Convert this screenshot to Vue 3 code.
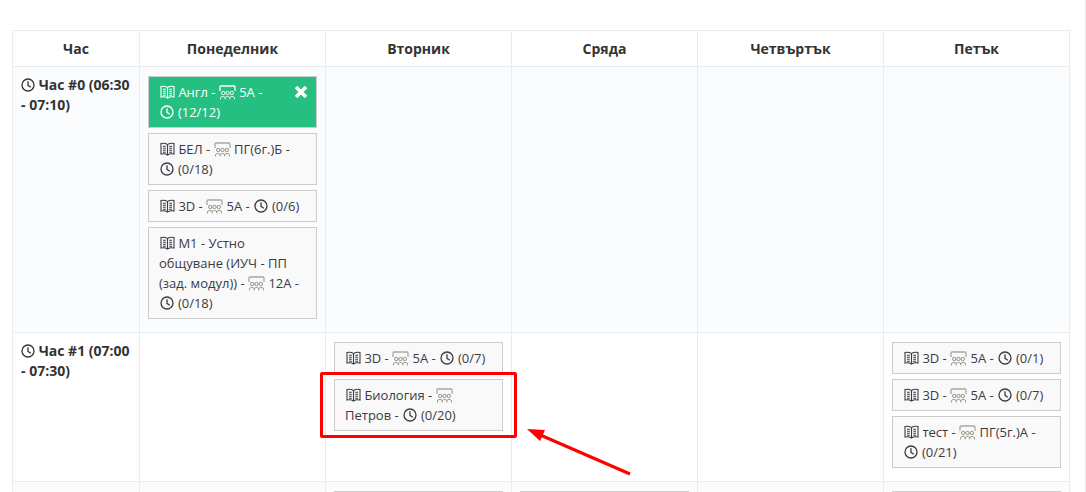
<script setup>
const days = ['Понеделник', 'Вторник', 'Сряда', 'Четвъртък', 'Петък']
const rows = [
  {
    label: 'Час #0 (06:30 - 07:10)',
    cells: [
      [
        { subject: 'Англ', group: '5А', count: '(12/12)', active: true },
        { subject: 'БЕЛ', group: 'ПГ(6г.)Б', count: '(0/18)' },
        { subject: '3D', group: '5А', count: '(0/6)' },
        { subject: 'М1 - Устно общуване (ИУЧ - ПП (зад. модул))', group: '12А', count: '(0/18)' },
      ],
      [], [], [], [],
    ],
  },
  {
    label: 'Час #1 (07:00 - 07:30)',
    cells: [
      [],
      [
        { subject: '3D', group: '5А', count: '(0/7)' },
        { subject: 'Биология', group: 'Петров', count: '(0/20)' },
      ],
      [], [],
      [
        { subject: '3D', group: '5А', count: '(0/1)' },
        { subject: '3D', group: '5А', count: '(0/7)' },
        { subject: 'тест', group: 'ПГ(5г.)А', count: '(0/21)' },
      ],
    ],
  },
  {
    label: '',
    cells: [
      [],
      [{ subject: '', group: '', count: '' }],
      [{ subject: '', group: '', count: '' }],
      [],
      [{ subject: '', group: '', count: '' }],
    ],
  },
]
</script>

<template>
  <div class="page">
    <div class="table">
      <div class="row head">
        <div class="cell first">Час</div>
        <div v-for="d in days" :key="d" class="cell">{{ d }}</div>
      </div>
      <div v-for="(r, i) in rows" :key="i" class="row" :class="{ odd: i % 2 === 0 }">
        <div class="cell first hour">
          <template v-if="r.label">
            <svg class="ico" viewBox="0 0 14 14"><circle cx="7" cy="7" r="6" /><path d="M7 3.2V7.4L9.8 9.2" /></svg>
            {{ r.label }}
          </template>
        </div>
        <div v-for="(c, j) in r.cells" :key="j" class="cell slots">
          <div v-for="(s, k) in c" :key="k" class="card" :class="{ active: s.active }">
            <svg v-if="s.active" class="close" viewBox="0 0 14 14"><path d="M2 2L12 12M12 2L2 12" /></svg>
            <template v-if="s.subject">
              <svg class="ico book" viewBox="0 0 15 14"><path d="M7.5 2.6C6 1.4 3 1.1 1 1.5V12C3 11.6 6 11.9 7.5 13C9 11.9 12 11.6 14 12V1.5C12 1.1 9 1.4 7.5 2.6ZM7.5 2.6V13M3 4.2H5.8M3 6.2H5.8M3 8.2H5.8M3 10.2H5.8M9.2 4.2H12M9.2 6.2H12M9.2 8.2H12M9.2 10.2H12" /></svg>
              {{ s.subject }} -
              <svg class="ico group" viewBox="0 0 17 15"><path class="board" d="M1 6V2Q1 1 2 1H15Q16 1 16 2V6" /><path class="people" d="M2.5 8A1.7 1.7 0 1 1 5.9 8A1.7 1.7 0 1 1 2.5 8ZM6.8 8A1.7 1.7 0 1 1 10.2 8A1.7 1.7 0 1 1 6.8 8ZM11.1 8A1.7 1.7 0 1 1 14.5 8A1.7 1.7 0 1 1 11.1 8ZM1.5 14.4V13C1.5 11 6.2 11 6.2 13V14.4M6.2 13C6.2 11 10.8 11 10.8 13V14.4M10.8 13C10.8 11 15.5 11 15.5 13V14.4" /></svg>
              {{ s.group }} -
              <span class="count"><svg class="ico clock" viewBox="0 0 14 14"><circle cx="7" cy="7" r="6" /><path d="M7 3.2V7.4L9.8 9.2" /></svg> {{ s.count }}</span>
            </template>
          </div>
        </div>
      </div>
    </div>
    <div class="highlight"></div>
    <svg class="arrow" viewBox="0 0 120 60" width="120" height="60">
      <path d="M110 54L18 14" />
      <polygon points="7,9 25,10 20,21" />
    </svg>
  </div>
</template>

<style scoped>
.page {
  position: relative;
  height: 492px;
  overflow: hidden;
  background: #fff;
  padding: 30px 16px 0 12px;
  box-sizing: border-box;
  border-right: 1px solid #eee;
  font: 13px/20px "Open Sans", sans-serif;
  color: #3b3b45;
}
.table {
  border-top: 1px solid #e9ecef;
  border-left: 1px solid #e9ecef;
  width: 1058px;
}
.row {
  display: grid;
  grid-template-columns: 127px repeat(5, 186px);
}
.odd {
  background: #fbfcfe;
}
.head {
  background: #fff;
  font-size: 14px;
  font-weight: 700;
  text-align: center;
  color: #333;
}
.cell {
  border-right: 1px solid #e9ecef;
  border-bottom: 1px solid #e9ecef;
  padding: 8px;
  box-sizing: border-box;
  min-width: 0;
}
.head .cell {
  padding: 8px 8px 7px;
}
.hour {
  font-size: 14px;
  font-weight: 700;
  color: #333;
}
.slots {
  display: flex;
  flex-direction: column;
  gap: 5px;
  padding: 9px 8px 13px;
}
.card {
  position: relative;
  border: 1px solid #ccc;
  background: #f9f9f9;
  padding: 5px 10px;
}
.card.active {
  background: #26bf82;
  color: #fff;
  border-color: #ccc;
}
.count {
  white-space: nowrap;
}
.ico {
  display: inline-block;
  width: 14px;
  height: 14px;
  vertical-align: -2px;
  fill: none;
  stroke: currentColor;
  stroke-width: 1.3;
}
.clock {
  margin: 0 0.5px 0 1px;
}
.book {
  width: 15px;
  margin-left: 1px;
  stroke-width: 1.1;
}
.group {
  width: 17px;
  height: 15px;
  vertical-align: -3px;
}
.group .people {
  stroke: #8b8478;
  stroke-width: 0.9;
}
.group .board {
  stroke: #a8a8a8;
  stroke-width: 1.3;
}
.active .group .people,
.active .group .board {
  stroke: #fff;
}
.close {
  position: absolute;
  top: 8px;
  right: 8px;
  width: 14px;
  height: 14px;
  fill: none;
  stroke: #fff;
  stroke-width: 3.6;
}
.highlight {
  position: absolute;
  left: 320px;
  top: 372px;
  width: 197px;
  height: 66px;
  border: 3px solid #f00;
  box-sizing: border-box;
  border-radius: 2px;
}
.arrow {
  position: absolute;
  left: 520px;
  top: 420px;
}
.arrow path {
  stroke: #f00;
  stroke-width: 3;
  fill: none;
}
.arrow polygon {
  fill: #f00;
}
</style>
